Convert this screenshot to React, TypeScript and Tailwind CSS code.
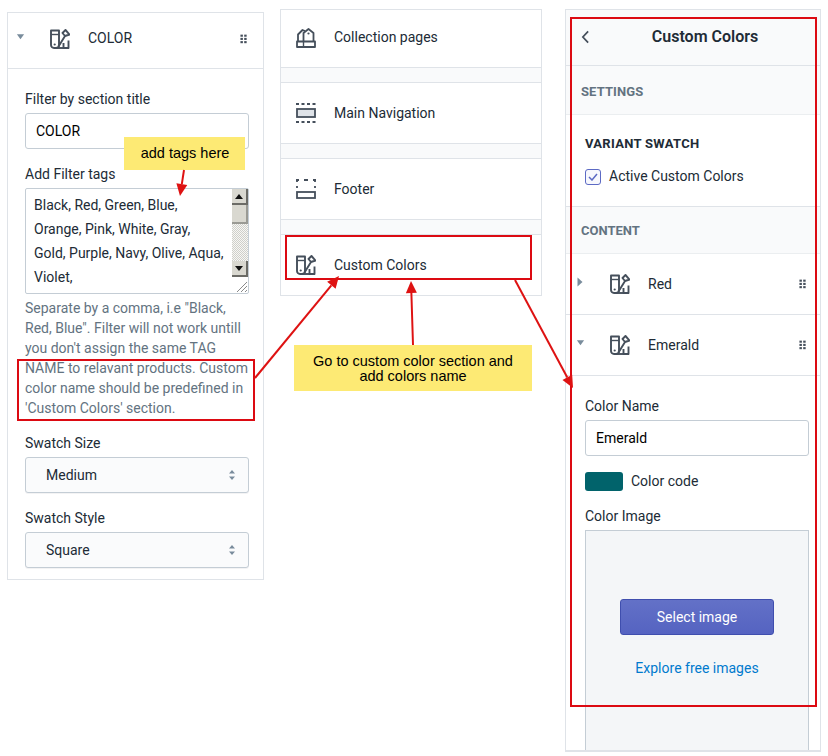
import React from "react";

function ColorIcon({ className = "" }: { className?: string }) {
  return (
    <svg viewBox="0 0 20 20" className={className} fill="none" stroke="#454f5b" strokeWidth="1.9">
      <path d="M1 1.500h8V16a3 3 0 0 1-3 3H4a3 3 0 0 1-3-3z" strokeLinejoin="round" />
      <path d="M1 5.500h8" strokeWidth="1.400" />
      <path d="M8.500 17.500L15 7l-2.500-3L15.500 1l4 4.500-4.500 1.500" strokeLinejoin="round" />
      <path d="M18.500 11.500v7.500H13.500v-5" strokeLinejoin="round" />
      <path d="M6 19h13" />
      <circle cx="4.700" cy="15.500" r="1.100" fill="#454f5b" stroke="none" />
    </svg>
  );
}

function CollectionIcon() {
  return (
    <svg viewBox="0 0 20 20" className="w-5 h-5 shrink-0" fill="none" stroke="#454f5b" strokeWidth="1.800">
      <path d="M2 13V6.500L6.500 2 9 3" strokeLinejoin="round" />
      <path d="M7.500 13V5l5-4 5 4v8" strokeLinejoin="round" />
      <path d="M1 13.500h18V19H1z" strokeLinejoin="round" />
      <path d="M7.500 13.500V19" strokeWidth="1.400" />
      <circle cx="12.500" cy="5.500" r="1.100" fill="#454f5b" stroke="none" />
    </svg>
  );
}

function NavIcon() {
  return (
    <svg viewBox="0 0 20 20" className="w-5 h-5 shrink-0" fill="none" stroke="#454f5b" strokeWidth="1.800">
      <path d="M0 1h20M0 19h20" strokeDasharray="3 2.500" />
      <rect x="1" y="6" width="18" height="8" fill="#dfe3e8" />
    </svg>
  );
}

function FooterIcon() {
  return (
    <svg viewBox="0 0 20 20" className="w-5 h-5 shrink-0" fill="none" stroke="#454f5b" strokeWidth="1.800">
      <path d="M0 1h3M8 1h4M17 1h3" />
      <path d="M1 1v2M19 1v2M1 7v2M19 7v2" />
      <rect x="1" y="13" width="18" height="6" />
    </svg>
  );
}

function Grip() {
  return (
    <svg viewBox="0 0 8 10" className="w-[7px] h-2.5 shrink-0" fill="#454f5b">
      <rect x="0.500" y="0" width="2.800" height="2.400" />
      <rect x="4.800" y="0" width="2.800" height="2.400" />
      <rect x="0.500" y="3.700" width="2.800" height="2.400" />
      <rect x="4.800" y="3.700" width="2.800" height="2.400" />
      <rect x="0.500" y="7.400" width="2.800" height="2.400" />
      <rect x="4.800" y="7.400" width="2.800" height="2.400" />
    </svg>
  );
}

function CaretDown() {
  return (
    <svg viewBox="0 0 10 6" className="w-[9px] h-1.5 shrink-0" fill="#798c9c">
      <path d="M1 0h8L5 5.500z" />
    </svg>
  );
}

function CaretRight() {
  return (
    <svg viewBox="0 0 6 10" className="w-1.5 h-2.5 shrink-0" fill="#798c9c">
      <path d="M0.500 0.500v9L5.500 5z" />
    </svg>
  );
}

function SelectArrows() {
  return (
    <svg viewBox="0 0 8 12" className="w-2 h-3 shrink-0" fill="#798c9c">
      <path d="M4 1l3 3.500H1zM4 11L1 7.500h6z" />
    </svg>
  );
}

function Block({ label, chevron, pad }: { label: string; chevron: React.ReactNode; pad: string }) {
  return (
    <div className="h-[61px] flex items-center border-b border-[#dfe3e8] pr-[14px]">
      <div className={`w-[44px] -mt-[4px] flex justify-start ${pad}`}>{chevron}</div>
      <ColorIcon className="w-5 h-5 shrink-0" />
      <span className="ml-[18px] flex-1 text-[14px] text-[#212b36]">{label}</span>
      <Grip />
    </div>
  );
}

function SelectBox({ value }: { value: string }) {
  return (
    <div className="mt-[4px] h-[36px] rounded-[3px] border border-[#c4cdd5] bg-[#fafbfc] shadow-[0_1px_0_rgba(22,29,37,0.05)] flex items-center pl-[20px] pr-[12px]">
      <span className="flex-1 text-[14px] text-[#212b36]">{value}</span>
      <SelectArrows />
    </div>
  );
}

function Scrollbar() {
  const btn = "h-[16px] bg-[#d9d8d0] border-r-2 border-b-2 border-[#6b6b66] flex items-center justify-center";
  return (
    <div className="w-[16px] h-[88px] flex flex-col shrink-0 bg-[repeating-conic-gradient(#cfcfca_0_25%,#f7f7f4_0_50%)] bg-[length:2px_2px]">
      <div className={btn}>
        <svg viewBox="0 0 8 5" className="w-2 h-[5px]" fill="#111"><path d="M4 0l4 5H0z" /></svg>
      </div>
      <div className="h-[19px] bg-[#d9d8d0] border-r-2 border-b-2 border-[#9a9a94]" />
      <div className="flex-1" />
      <div className={btn}>
        <svg viewBox="0 0 8 5" className="w-2 h-[5px]" fill="#111"><path d="M0 0h8L4 5z" /></svg>
      </div>
    </div>
  );
}

function LeftPanel() {
  return (
    <section className="ml-[7px] mt-[12px] w-[257px] h-[568px] shrink-0 border border-[#dfe3e8] bg-white">
      <div className="h-[56px] pb-[4px] flex items-center border-b border-[#dfe3e8] pr-[16px]">
        <div className="w-[42px] pl-[8px] -mt-[4px]"><CaretDown /></div>
        <ColorIcon className="w-5 h-5 shrink-0" />
        <span className="ml-[18px] flex-1 text-[14px] text-[#212b36]">COLOR</span>
        <Grip />
      </div>
      <div className="pt-[20px] pl-[17px] pr-[14px]">
        <div className="text-[14px] leading-[20px] text-[#212b36]">Filter by section title</div>
        <div className="mt-[4px] h-[36px] rounded-[3px] border border-[#c4cdd5] bg-white flex items-center px-[10px] text-[14px] text-black">COLOR</div>
        <div className="mt-[15px] text-[14px] leading-[20px] text-[#212b36]">Add Filter tags</div>
        <div className="mt-[4px] h-[106px] border border-[#c4cdd5] rounded-[2px] bg-white flex relative">
          <div className="flex-1 pl-[8px] pt-[4px] text-[14px] leading-[24px] text-[#212b36]">
            Black, Red, Green, Blue,<br />Orange, Pink, White, Gray,<br />Gold, Purple, Navy, Olive, Aqua,<br />Violet,
          </div>
          <Scrollbar />
          <svg viewBox="0 0 14 14" className="absolute right-0 bottom-0 w-[14px] h-[14px]" stroke="#8a8a8a" strokeWidth="1">
            <path d="M13 3L3 13M13 7L7 13M13 11L11 13" />
          </svg>
        </div>
        <p className="mt-[4px] text-[14px] leading-[20px] text-[#637381]">
          Separate by a comma, i.e "Black, Red, Blue". Filter will not work untill you don't assign the same TAG NAME to relavant products. Custom color name should be predefined in 'Custom Colors' section.
        </p>
        <div className="mt-[15px] text-[14px] leading-[20px] text-[#212b36]">Swatch Size</div>
        <SelectBox value="Medium" />
        <div className="mt-[15px] text-[14px] leading-[20px] text-[#212b36]">Swatch Style</div>
        <SelectBox value="Square" />
      </div>
    </section>
  );
}

function MiddlePanel() {
  const row = "bg-white flex items-center pl-[15px] gap-[18px] border-b border-[#dfe3e8] text-[14px] text-[#212b36]";
  return (
    <section className="ml-[16px] mt-[9px] w-[262px] h-[287px] shrink-0 border border-[#dfe3e8] bg-[#f9fafb]">
      <div className={`h-[58px] pb-[2px] ${row}`}>
        <CollectionIcon />
        <span>Collection pages</span>
      </div>
      <div className={`mt-[14px] h-[62px] border-t ${row}`}>
        <NavIcon />
        <span>Main Navigation</span>
      </div>
      <div className={`mt-[14px] h-[62px] border-t ${row}`}>
        <FooterIcon />
        <span>Footer</span>
      </div>
      <div className={`mt-[14px] h-[61px] border-t ${row} border-b-0`}>
        <ColorIcon className="w-5 h-5 shrink-0" />
        <span>Custom Colors</span>
      </div>
    </section>
  );
}

function RightPanel() {
  return (
    <section className="ml-[23px] mt-[9px] w-[256px] h-[743px] shrink-0 border-x border-b-2 border-t border-[#dfe3e8] bg-white overflow-hidden">
      <header className="h-[56px] pb-[2px] bg-[#f9fafb] border-b border-[#dfe3e8] flex items-center relative">
        <svg viewBox="0 0 10 16" className="ml-[15px] w-[9px] h-[14px]" fill="none" stroke="#454f5b" strokeWidth="2">
          <path d="M8 1.500L2 8l6 6.500" />
        </svg>
        <span className="absolute inset-x-0 pl-[24px] text-center text-[16px] font-semibold text-[#212b36]">Custom Colors</span>
      </header>
      <div className="h-[49px] pt-[3px] bg-[#f9fafb] border-b border-[#ebeef0] flex items-center pl-[15px] text-[13px] font-bold text-[#637381] tracking-[0.1px]">SETTINGS</div>
      <div className="h-[92px] border-b border-[#dfe3e8] pt-[20px] pl-[19px]">
        <div className="text-[13px] leading-[18px] font-bold text-[#212b36] tracking-[0.3px]">VARIANT SWATCH</div>
        <div className="mt-[13px] flex items-center gap-[8px]">
          <span className="w-4 h-4 rounded-[3px] border border-[#5c6ac4] bg-[#f7f8fd] flex items-center justify-center">
            <svg viewBox="0 0 10 8" className="w-2.5 h-2" fill="none" stroke="#5c6ac4" strokeWidth="1.500">
              <path d="M1 4l3 3 5-6" />
            </svg>
          </span>
          <span className="text-[14px] text-[#212b36]">Active Custom Colors</span>
        </div>
      </div>
      <div className="h-[47px] pt-[2px] bg-[#f9fafb] border-b border-[#ebeef0] flex items-center pl-[15px] text-[13px] font-bold text-[#637381]">CONTENT</div>
      <Block label="Red" chevron={<CaretRight />} pad="pl-[11px]" />
      <Block label="Emerald" chevron={<CaretDown />} pad="pl-[10px]" />
      <div className="pl-[19px] pr-[11px] pt-[20px]">
        <div className="text-[14px] leading-[20px] text-[#212b36]">Color Name</div>
        <div className="mt-[4px] h-[36px] rounded-[3px] border border-[#c4cdd5] bg-white flex items-center px-[10px] text-[14px] text-black">Emerald</div>
        <div className="mt-[15px] flex items-center gap-[8px]">
          <span className="w-[38px] h-[19px] rounded-[3px] bg-[#01636b]" />
          <span className="text-[14px] text-[#212b36]">Color code</span>
        </div>
        <div className="mt-[14px] text-[14px] leading-[20px] text-[#212b36]">Color Image</div>
        <div className="mt-[4px] h-[240px] border border-[#c4cdd5] bg-[#f4f6f8] pt-[68px] flex flex-col items-center">
          <button className="w-[154px] h-[36px] rounded-[3px] border border-[#3f4eae] bg-gradient-to-b from-[#6371c7] to-[#5563c1] text-[14px] text-white">Select image</button>
          <span className="mt-[24px] text-[14px] leading-[18px] text-[#007ace]">Explore free images</span>
        </div>
      </div>
    </section>
  );
}

function Arrow({ x1, y1, x2, y2 }: { x1: number; y1: number; x2: number; y2: number }) {
  const a = Math.atan2(y2 - y1, x2 - x1);
  const len = 12;
  const w = 5.500;
  const bx = x2 - len * Math.cos(a);
  const by = y2 - len * Math.sin(a);
  const nx = -Math.sin(a) * w;
  const ny = Math.cos(a) * w;
  return (
    <g>
      <line x1={x1} y1={y1} x2={bx} y2={by} stroke="#de1212" strokeWidth="2" />
      <polygon points={`${x2},${y2} ${bx + nx},${by + ny} ${bx - nx},${by - ny}`} fill="#de1212" />
    </g>
  );
}

export default function App() {
  return (
    <div className="relative w-[828px] h-[756px] overflow-hidden bg-white flex items-start font-['Roboto',sans-serif]">
      <LeftPanel />
      <MiddlePanel />
      <RightPanel />

      <div className="absolute left-[17px] top-[359px] w-[238px] h-[62px] border-2 border-[#dc0a12]" />
      <div className="absolute left-[285px] top-[235px] w-[247px] h-[45px] border-2 border-[#dc0a12]" />
      <div className="absolute left-[570px] top-[17px] w-[247px] h-[690px] border-2 border-[#dc0a12]" />

      <div className="absolute left-[124px] top-[137px] w-[121px] h-[33px] pl-[1px] bg-[#fdea74] flex items-center justify-center text-[14.500px] text-black font-['Liberation_Sans',sans-serif]">add tags here</div>
      <div className="absolute left-[294px] top-[345px] w-[238px] h-[46px] pt-[1px] bg-[#fdea74] flex items-center justify-center text-center text-[14.500px] leading-[15px] text-black font-['Liberation_Sans',sans-serif]">Go to custom color section and<br />add colors name</div>

      <svg className="absolute inset-0 w-[828px] h-[756px] pointer-events-none" viewBox="0 0 828 756">
        <Arrow x1={184} y1={170} x2={180} y2={196} />
        <Arrow x1={255} y1={378} x2={339} y2={276} />
        <Arrow x1={413} y1={345} x2={411} y2={281} />
        <Arrow x1={515} y1={280} x2={573} y2={388} />
      </svg>
    </div>
  );
}
